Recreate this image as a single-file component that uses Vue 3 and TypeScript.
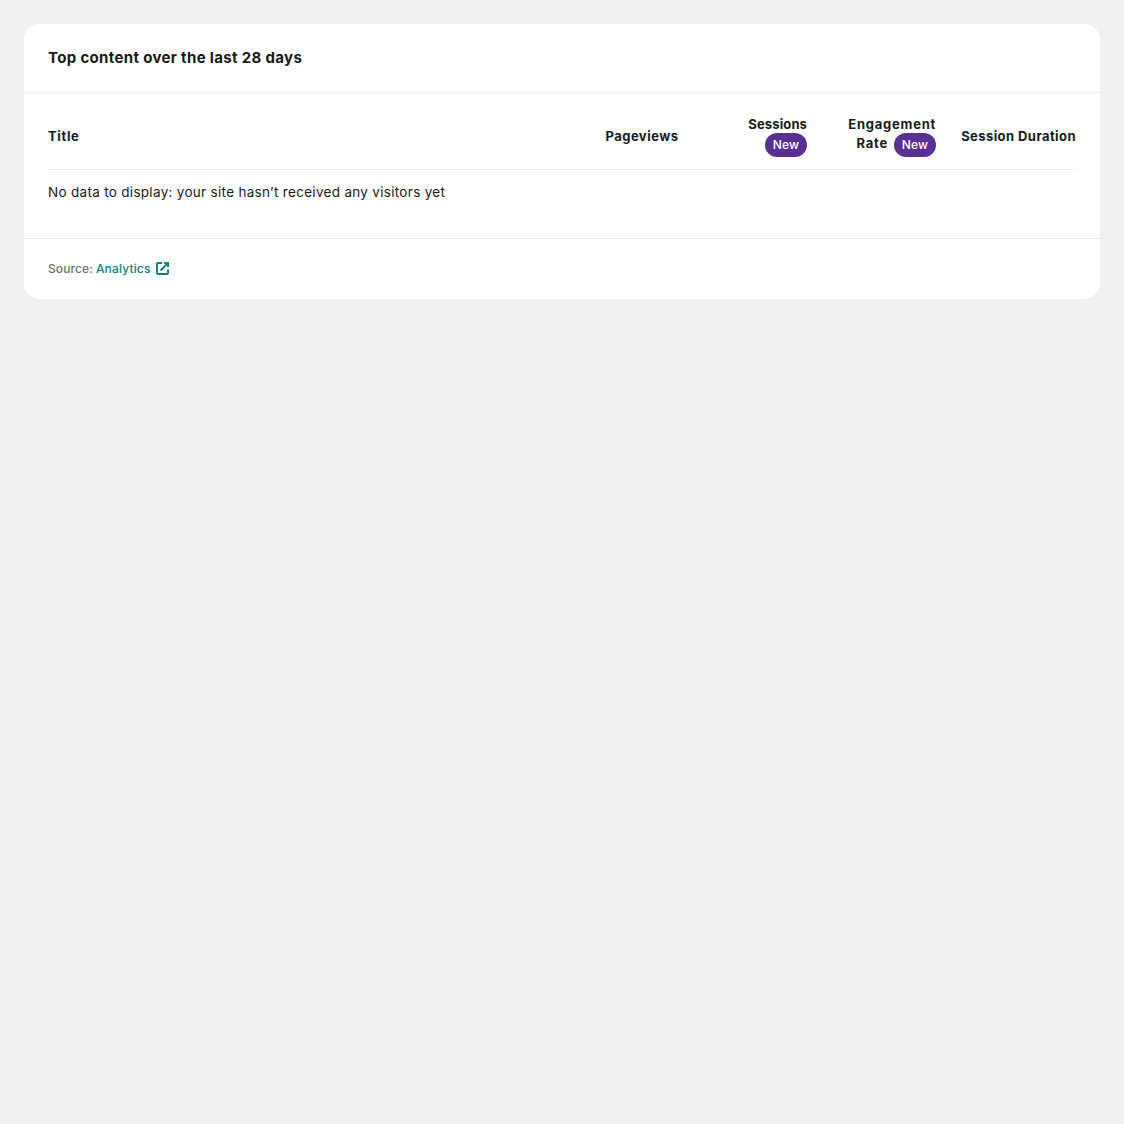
<script setup lang="ts">
interface Column {
  key: string
  lines: string[]
  badge?: boolean
}

const columns: Column[] = [
  { key: 'title', lines: ['Title'] },
  { key: 'pageviews', lines: ['Pageviews'] },
  { key: 'sessions', lines: ['Sessions', ''], badge: true },
  { key: 'engagement', lines: ['Engagement', 'Rate'], badge: true },
  { key: 'duration', lines: ['Session Duration'] },
]
</script>

<template>
  <main class="page">
    <section class="widget">
      <header class="widget-header">
        <h3>Top content over the last 28 days</h3>
      </header>
      <div class="widget-body">
        <div class="row">
          <div v-for="c in columns" :key="c.key" class="cell" :class="c.key">
            <div v-for="(line, i) in c.lines" :key="i" class="line">
              <span v-if="line">{{ line }}</span>
              <span v-if="c.badge && i === 1" class="badge">New</span>
            </div>
          </div>
        </div>
        <p class="empty">No data to display: your site hasn’t received any visitors yet</p>
      </div>
      <footer class="widget-footer">
        <span class="source">Source:</span>
        <a class="link">
          <span>Analytics</span>
          <svg width="13" height="13" viewBox="0 0 13 13" fill="none" stroke="currentColor" stroke-width="1.9">
            <path d="M6 .95H1.9Q.95.95.95 1.9v9.2q0 .95.95.95h9.2q.95 0 .95-.95V7.5" />
            <path d="M8 .95h4.05V5.2M11.8 1.2 4.5 8.5" />
          </svg>
        </a>
      </footer>
    </section>
  </main>
</template>

<style>
body {
  background: #f1f1f1;
}
</style>

<style scoped>
.page {
  padding: 24px;
  font-family: 'Google Sans', Inter, 'Liberation Sans', sans-serif;
  font-size: 13.5px;
  color: #161b18;
}
.widget {
  background: #fff;
  border-radius: 16px;
  overflow: hidden;
}
.widget-header {
  box-sizing: border-box;
  height: 69px;
  padding: 22px 24px;
  border-bottom: 1px solid #ebeef0;
}
h3 {
  margin: 0;
  font-size: 15px;
  line-height: 23px;
  font-weight: 700;
  letter-spacing: 0.34px;
}
.widget-body {
  box-sizing: border-box;
  height: 146px;
  padding: 0 24px;
  border-bottom: 1px solid #ebeef0;
}
.row {
  box-sizing: border-box;
  height: 77px;
  display: flex;
  align-items: center;
  border-bottom: 1px solid #ebeef0;
  padding-top: 10px;
}
.cell {
  font-size: 13px;
  font-weight: 700;
  text-align: right;
  white-space: nowrap;
}
.title { width: 501px; text-align: left; letter-spacing: 0.65px; }
.pageviews { width: 129.5px; letter-spacing: 0.48px; }
.sessions { width: 128.5px; letter-spacing: 0.12px; }
.engagement { width: 129px; letter-spacing: 0.75px; }
.duration { width: 140px; letter-spacing: 0.43px; }
.line {
  height: 20px;
  line-height: 20px;
}
.line + .line {
  display: flex;
  align-items: center;
  justify-content: flex-end;
  height: 24px;
  margin-top: -1px;
  line-height: 21px;
  padding-bottom: 1px;
}
.line + .line > span:first-child:not(.badge) {
  height: 24px;
}
.badge {
  box-sizing: border-box;
  width: 42px;
  height: 24px;
  border-radius: 12px;
  background: #583094;
  color: #fff;
  font-size: 12px;
  font-weight: 500;
  line-height: 24px;
  text-align: center;
  letter-spacing: 0.2px;
  margin-left: 6px;
}
.empty {
  margin: 12px 0 0;
  line-height: 20px;
  letter-spacing: 0.3px;
}
.widget-footer {
  display: flex;
  align-items: center;
  box-sizing: border-box;
  height: 60px;
  padding: 0 24px 1px;
  font-size: 12px;
  font-weight: 500;
}
.source {
  font-weight: 500;
  color: #6c726e;
  letter-spacing: 0.1px;
  margin-right: 3px;
}
.link {
  display: flex;
  align-items: center;
  gap: 5px;
  color: #108080;
  letter-spacing: 0.15px;
}
</style>
